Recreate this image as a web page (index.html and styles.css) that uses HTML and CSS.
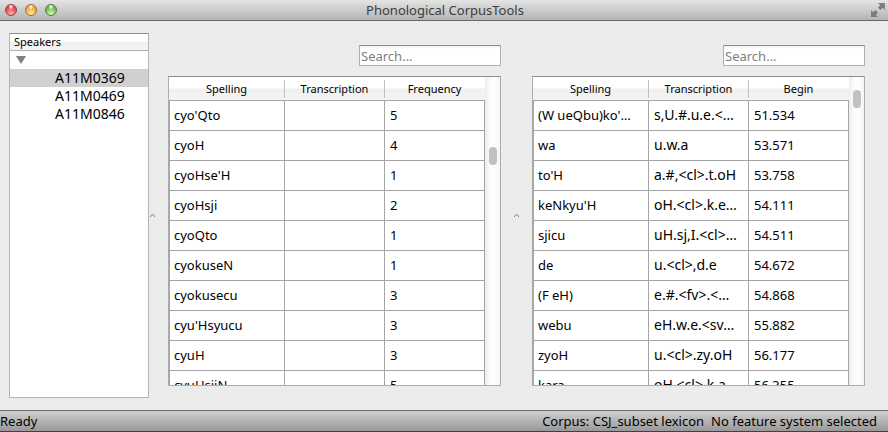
FILE: index.html
```
<!DOCTYPE html>
<html lang="en">
<head>
<meta charset="utf-8">
<title>Phonological CorpusTools</title>
<link rel="stylesheet" href="styles.css">
</head>
<body>
<header class="titlebar">
  <div class="lights">
    <button class="light light-close" aria-label="Close"></button>
    <button class="light light-minimize" aria-label="Minimize"></button>
    <button class="light light-zoom" aria-label="Zoom"></button>
  </div>
  <h1 class="title">Phonological CorpusTools</h1>
  <button class="fullscreen" aria-label="Full screen">
    <svg width="14" height="14" viewBox="0 0 14 14"><path d="M7 0H14V7L11.800 4.800L9.500 7L7 4.500L9.200 2.200ZM0 7L2.200 9.200L4.500 7L7 9.500L4.800 11.800L7 14H0Z" fill="#7c7c7c"/></svg>
  </button>
</header>
<main class="workspace">
  <section class="tree">
    <h2 class="tree-head">Speakers</h2>
    <ul class="tree-list">
      <li class="tree-root"><svg width="10" height="8" viewBox="0 0 10 8"><path d="M0 0H10L5 8Z" fill="#808080"/></svg></li>
      <li class="tree-item selected">A11M0369</li>
      <li class="tree-item">A11M0469</li>
      <li class="tree-item">A11M0846</li>
    </ul>
  </section>
  <div class="splitter"><svg width="5" height="4" viewBox="0 0 5 4"><path d="M.5 3V2L2 .8H3.500L4.500 2V3" fill="none" stroke="#858585"/></svg></div>
  <section class="panel">
    <input class="search" type="text" placeholder="Search..." aria-label="Search lexicon">
    <div class="view">
      <div class="clip">
        <table class="grid">
          <colgroup><col><col class="col-narrow"><col class="col-narrow"></colgroup>
          <thead><tr><th><span>Spelling</span></th><th><span>Transcription</span></th><th><span>Frequency</span></th></tr></thead>
          <tbody>
            <tr><td>cyo'Qto</td><td></td><td>5</td></tr>
            <tr><td>cyoH</td><td></td><td>4</td></tr>
            <tr><td>cyoHse'H</td><td></td><td>1</td></tr>
            <tr><td>cyoHsji</td><td></td><td>2</td></tr>
            <tr><td>cyoQto</td><td></td><td>1</td></tr>
            <tr><td>cyokuseN</td><td></td><td>1</td></tr>
            <tr><td>cyokusecu</td><td></td><td>3</td></tr>
            <tr><td>cyu'Hsyucu</td><td></td><td>3</td></tr>
            <tr><td>cyuH</td><td></td><td>3</td></tr>
            <tr><td>cyuHsjiN</td><td></td><td>5</td></tr>
          </tbody>
        </table>
      </div>
      <div class="scrollbar"><div class="thumb thumb-middle"></div></div>
    </div>
  </section>
  <div class="splitter"><svg width="5" height="4" viewBox="0 0 5 4"><path d="M.5 3V2L2 .8H3.500L4.500 2V3" fill="none" stroke="#858585"/></svg></div>
  <section class="panel">
    <input class="search" type="text" placeholder="Search..." aria-label="Search tokens">
    <div class="view">
      <div class="clip">
        <table class="grid">
          <colgroup><col><col class="col-narrow"><col class="col-narrow"></colgroup>
          <thead><tr><th><span>Spelling</span></th><th><span>Transcription</span></th><th><span>Begin</span></th></tr></thead>
          <tbody>
            <tr><td>(W ueQbu)ko'…</td><td class="phones">s,U.#.u.e.&lt;…</td><td>51.534</td></tr>
            <tr><td>wa</td><td class="phones">u.w.a</td><td>53.571</td></tr>
            <tr><td>to'H</td><td class="phones">a.#,&lt;cl&gt;.t.oH</td><td>53.758</td></tr>
            <tr><td>keNkyu'H</td><td class="phones">oH.&lt;cl&gt;.k.e…</td><td>54.111</td></tr>
            <tr><td>sjicu</td><td class="phones">uH.sj,I.&lt;cl&gt;…</td><td>54.511</td></tr>
            <tr><td>de</td><td class="phones">u.&lt;cl&gt;,d.e</td><td>54.672</td></tr>
            <tr><td>(F eH)</td><td class="phones">e.#.&lt;fv&gt;.&lt;…</td><td>54.868</td></tr>
            <tr><td>webu</td><td class="phones">eH.w.e.&lt;sv…</td><td>55.882</td></tr>
            <tr><td>zyoH</td><td class="phones">u.&lt;cl&gt;.zy.oH</td><td>56.177</td></tr>
            <tr><td>kara</td><td class="phones">oH.&lt;cl&gt;.k.a…</td><td>56.355</td></tr>
          </tbody>
        </table>
      </div>
      <div class="scrollbar"><div class="thumb thumb-top"></div></div>
    </div>
  </section>
</main>
<footer class="statusbar">
  <span class="status-message">Ready</span>
  <span>Corpus: CSJ_subset lexicon</span>
  <span>No feature system selected</span>
</footer>
</body>
</html>
```
FILE: styles.css
```
* { box-sizing: border-box; }

body {
  margin: 0;
  height: 100vh;
  display: flex;
  flex-direction: column;
  overflow: hidden;
  background: #ececec;
  color: #000;
  font: 13px/18px "Noto Sans", "Open Sans", sans-serif;
}

h1, h2 { margin: 0; font-weight: 400; }

button { padding: 0; border: 0; background: none; }

.titlebar {
  flex: none;
  height: 21px;
  display: grid;
  grid-template-columns: 1fr auto 1fr;
  align-items: center;
  padding: 0 3px 0 5px;
  background: linear-gradient(#e4e4e4, #b4b4b4);
  border-bottom: 1px solid #686868;
}

.lights { display: flex; gap: 8px; }

.light {
  width: 12px;
  height: 12px;
  border-radius: 50%;
  border: 1px solid;
}

.light-close {
  border-color: #9c3e3e;
  background: radial-gradient(ellipse at 50% 15%, #fff 5%, transparent 30%), radial-gradient(circle at 50% 90%, #ffb0a8, #e2484c 65%);
}

.light-minimize {
  border-color: #a06a2c;
  background: radial-gradient(ellipse at 50% 15%, #fff 5%, transparent 30%), radial-gradient(circle at 50% 90%, #fff09a, #eda83e 65%);
}

.light-zoom {
  border-color: #4c7c3c;
  background: radial-gradient(ellipse at 50% 15%, #fff 5%, transparent 30%), radial-gradient(circle at 50% 90%, #d8ffb0, #70b858 65%);
}

.title { font-size: 13px; line-height: 20px; color: #3c3c3c; }

.fullscreen { justify-self: end; display: flex; }

.workspace {
  flex: 1;
  min-height: 0;
  display: flex;
  padding: 12px 11px 12px 9px;
}

.tree {
  flex: 0 0 140px;
  background: #fff;
  border: 1px solid #b4b4b4;
  border-top-color: #8c8c8c;
}

.tree-head {
  height: 17px;
  padding-left: 4px;
  font-size: 11px;
  line-height: 16px;
  border-bottom: 1px solid #b0b0b0;
  background: linear-gradient(#fff 45%, #f0f0f0 50%, #f4f4f4);
}

.tree-list { margin: 0; padding: 0; list-style: none; font-size: 14px; }

.tree-root { height: 18px; display: flex; align-items: center; padding-left: 6px; }

.tree-item { padding-left: 45px; }

.selected { background: #d0d0d0; }

.splitter {
  flex: 0 0 7px;
  display: flex;
  align-items: center;
  padding-left: 1px;
}

.panel {
  flex: 1;
  min-width: 0;
  display: flex;
  flex-direction: column;
  padding: 12px;
}

.search {
  align-self: flex-end;
  width: 142px;
  height: 21px;
  margin-bottom: 10px;
  padding: 0 1px;
  border: 1px solid #b0b0b0;
  border-top-color: #8c8c8c;
  background: linear-gradient(#f0f0f0, #fff 3px);
  font: inherit;
  font-size: 13px;
}

.search::placeholder { color: #808080; opacity: 1; }

.view {
  flex: 1;
  min-height: 0;
  display: flex;
  border: 1px solid #acacac;
  border-top-color: #8c8c8c;
  background: #fff;
}

.clip { flex: 1; min-width: 0; overflow: hidden; }

.grid {
  width: 100%;
  table-layout: fixed;
  border-collapse: separate;
  border-spacing: 0;
}

.col-narrow { width: 100px; }

.grid th {
  height: 24px;
  padding: 2px 0;
  font-size: 11px;
  font-weight: 400;
  line-height: 18px;
  border-bottom: 1px solid #a4a4a4;
  background: linear-gradient(#fff 48%, #f0f0f0 52%, #f4f4f4);
}

.grid th span { display: block; border-right: 1px solid #c0c0c0; }

.grid th:last-child span { border-right-color: transparent; }

.grid td {
  height: 30px;
  padding: 0 0 2px 5px;
  border-right: 1px solid #a4a4a4;
  border-bottom: 1px solid #a4a4a4;
  white-space: nowrap;
  overflow: hidden;
}

.grid td:first-child { padding-left: 4px; border-left: 1px solid #a4a4a4; }

.grid .phones { font-size: 14px; }

.scrollbar {
  flex: 0 0 15px;
  background: linear-gradient(90deg, #ededed, #fafafa 30%, #fff 60%, #f4f4f4);
}

.thumb {
  width: 8px;
  height: 18px;
  margin-left: 4px;
  border-radius: 4px;
  background: #c1c1c1;
}

.thumb-middle { margin-top: 70px; }

.thumb-top { margin-top: 13px; }

.statusbar {
  flex: none;
  height: 22px;
  display: flex;
  gap: 7px;
  padding-right: 11px;
  line-height: 20px;
  border-top: 1px solid #6c6c6c;
  border-bottom: 1px solid #404040;
  background: linear-gradient(#d0d0d0, #989898);
}

.status-message { flex: 1; }
```
